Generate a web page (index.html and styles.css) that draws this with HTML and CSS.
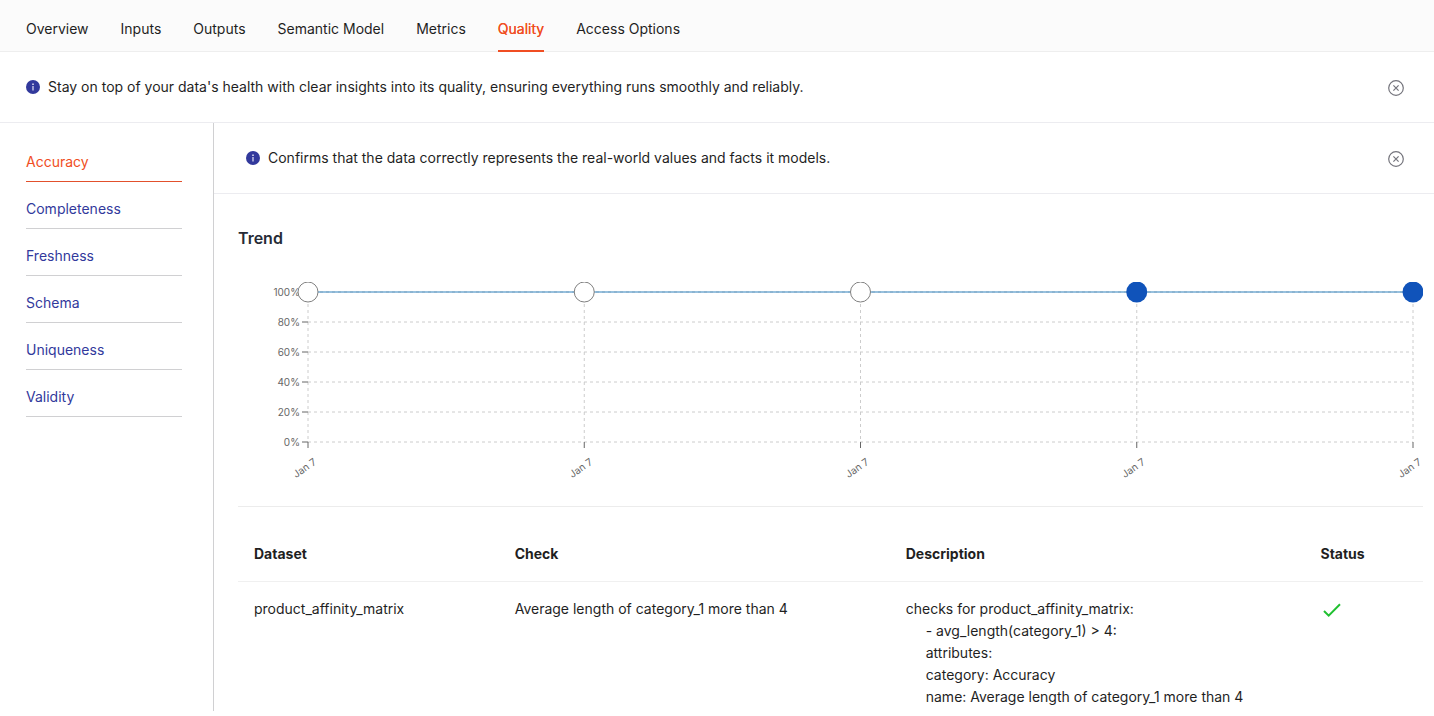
FILE: index.html
```html
<!DOCTYPE html>
<html lang="en">
<head>
<meta charset="utf-8">
<title>Quality</title>
<link rel="stylesheet" href="styles.css">
</head>
<body>
<svg class="defs" width="0" height="0" aria-hidden="true">
  <symbol id="info" viewBox="0 0 14 14">
    <circle cx="7" cy="7" r="7" fill="#32399c"/>
    <path d="M7 6v4.5" stroke="#e4e5f5" stroke-width="1.2"/>
    <path d="M7 3.5v1.4" stroke="#e4e5f5" stroke-width="1.5"/>
  </symbol>
  <symbol id="close" viewBox="0 0 16 16">
    <circle cx="8" cy="8" r="7.3" fill="none" stroke="#74747c" stroke-width="1.2"/>
    <path d="M5.4 5.4l5.2 5.2M10.6 5.4l-5.2 5.2" fill="none" stroke="#74747c" stroke-width="1.2"/>
  </symbol>
</svg>
<nav class="tabs">
  <a class="tab" href="#overview">Overview</a>
  <a class="tab" href="#inputs">Inputs</a>
  <a class="tab" href="#outputs">Outputs</a>
  <a class="tab" href="#model">Semantic Model</a>
  <a class="tab" href="#metrics">Metrics</a>
  <a class="tab tab-active" href="#quality" aria-current="page">Quality</a>
  <a class="tab" href="#access">Access Options</a>
</nav>
<div class="banner">
  <svg class="info"><use href="#info"/></svg>
  <p class="banner-text">Stay on top of your data's health with clear insights into its quality, ensuring everything runs smoothly and reliably.</p>
  <button class="close" type="button" aria-label="Close"><svg class="close-icon"><use href="#close"/></svg></button>
</div>
<div class="body">
  <aside class="sidebar">
    <a class="side-link side-active" href="#accuracy">Accuracy</a>
    <a class="side-link" href="#completeness">Completeness</a>
    <a class="side-link" href="#freshness">Freshness</a>
    <a class="side-link" href="#schema">Schema</a>
    <a class="side-link" href="#uniqueness">Uniqueness</a>
    <a class="side-link" href="#validity">Validity</a>
  </aside>
  <main class="main">
    <div class="banner banner-sub">
      <svg class="info"><use href="#info"/></svg>
      <p class="banner-text">Confirms that the data correctly represents the real-world values and facts it models.</p>
      <button class="close" type="button" aria-label="Close"><svg class="close-icon"><use href="#close"/></svg></button>
    </div>
    <div class="content">
      <h2 class="heading">Trend</h2>
      <svg class="chart" viewBox="0 0 1185 204" role="img" aria-label="Accuracy trend">
        <g class="grid">
          <path d="M70 10H1175M70 40H1175M70 70H1175M70 100H1175M70 130H1175M70 160H1175"/>
          <path d="M70 10V160M346.25 10V160M622.5 10V160M898.75 10V160M1175 10V160"/>
        </g>
        <path class="ticks" d="M64 10h6M64 40h6M64 70h6M64 100h6M64 130h6M64 160h6M70 160v6M346.25 160v6M622.5 160v6M898.75 160v6M1175 160v6"/>
        <g class="y-labels">
          <text x="62" y="14">100%</text>
          <text x="62" y="44">80%</text>
          <text x="62" y="74">60%</text>
          <text x="62" y="104">40%</text>
          <text x="62" y="134">20%</text>
          <text x="62" y="164">0%</text>
        </g>
        <g class="x-labels">
          <text transform="translate(68.5 189) rotate(-35)">Jan 7</text>
          <text transform="translate(344.75 189) rotate(-35)">Jan 7</text>
          <text transform="translate(621 189) rotate(-35)">Jan 7</text>
          <text transform="translate(897.25 189) rotate(-35)">Jan 7</text>
          <text transform="translate(1173.5 189) rotate(-35)">Jan 7</text>
        </g>
        <path class="line" d="M70 10H1175"/>
        <g class="dot">
          <circle cx="70" cy="10" r="10"/>
          <circle cx="346.25" cy="10" r="10"/>
          <circle cx="622.5" cy="10" r="10"/>
        </g>
        <g class="dot-filled">
          <circle cx="898.75" cy="10" r="10.5"/>
          <circle cx="1175" cy="10" r="10.5"/>
        </g>
      </svg>
      <table class="checks">
        <thead>
          <tr>
            <th class="col-dataset">Dataset</th>
            <th class="col-check">Check</th>
            <th class="col-description">Description</th>
            <th class="col-status">Status</th>
          </tr>
        </thead>
        <tbody>
          <tr>
            <td>product_affinity_matrix</td>
            <td>Average length of category_1 more than 4</td>
            <td>
              <div>checks for product_affinity_matrix:</div>
              <div class="nested">- avg_length(category_1) &gt; 4:</div>
              <div class="nested">attributes:</div>
              <div class="nested">category: Accuracy</div>
              <div class="nested">name: Average length of category_1 more than 4</div>
            </td>
            <td><svg class="pass" viewBox="0 0 24 24" role="img" aria-label="Passed"><path d="M4 13l4.7 4.7L20 6.3"/></svg></td>
          </tr>
        </tbody>
      </table>
    </div>
  </main>
</div>
</body>
</html>
```

FILE: styles.css
```css
* {
  box-sizing: border-box;
}

body {
  margin: 0;
  height: 100vh;
  padding-bottom: 5px;
  display: flex;
  flex-direction: column;
  overflow: hidden;
  background: #fff;
  color: #1f1f1f;
  font: 14px/22px Inter, sans-serif;
}

.defs {
  position: absolute;
}

.tabs {
  flex: none;
  display: flex;
  gap: 32px;
  padding: 0 26px;
  background: #fbfbfb;
  box-shadow: inset 0 -1px #eee;
}

.tab {
  padding: 18px 0 10px;
  border-bottom: 2px solid transparent;
  color: inherit;
  text-decoration: none;
}

.tab-active {
  border-color: #f04e23;
  color: #f04e23;
  text-shadow: 0 0 0.25px currentColor;
}

.banner {
  flex: none;
  display: flex;
  align-items: center;
  gap: 8px;
  padding: 24px 30px 24px 26px;
  border-bottom: 1px solid #ececf0;
}

.banner-sub {
  padding-left: 32px;
}

.info {
  flex: none;
  width: 14px;
  height: 14px;
}

.banner-text {
  flex: 1;
  margin: 0;
}

.close {
  display: flex;
  padding: 2px 0 0;
  border: 0;
  background: none;
  cursor: pointer;
}

.close-icon {
  width: 16px;
  height: 16px;
}

.body {
  flex: 1;
  min-height: 0;
  display: flex;
}

.sidebar {
  flex: none;
  width: 214px;
  padding: 12px 31px 0 26px;
  border-right: 1px solid #d0d0d2;
}

.side-link {
  display: block;
  padding: 16px 0 8px;
  border-bottom: 1px solid #d0d0d2;
  color: #32399c;
  text-decoration: none;
}

.side-active {
  border-color: #e2502c;
  color: #f04e23;
}

.main {
  flex: 1;
  min-width: 0;
  overflow: hidden;
}

.content {
  padding: 32px 11px 0 24px;
}

.heading {
  margin: 0 0 32px;
  color: #262b36;
  font-size: 16px;
  font-weight: 600;
  line-height: 24px;
}

.chart {
  display: block;
  width: 100%;
  margin-bottom: 20px;
}

.grid {
  fill: none;
  stroke: #ccc;
  stroke-dasharray: 3 3;
}

.ticks {
  fill: none;
  stroke: #666;
}

.y-labels,
.x-labels {
  fill: #666;
  font-size: 10px;
  text-anchor: end;
}

.x-labels {
  text-anchor: middle;
}

.line {
  fill: none;
  stroke: #3182bd;
}

.dot {
  fill: #fff;
  stroke: #808080;
}

.dot-filled {
  fill: #1053ba;
}

.checks {
  width: 100%;
  table-layout: fixed;
  border-collapse: separate;
  border-spacing: 0;
  border-top: 1px solid #ececec;
  padding-top: 20px;
  text-align: left;
}

.checks th,
.checks td {
  padding: 16px;
  vertical-align: top;
}

.checks th {
  border-bottom: 1px solid #f0f0f0;
  font-weight: 700;
}

.col-dataset {
  width: 22%;
}

.col-check {
  width: 33%;
}

.col-description {
  width: 35%;
}

.col-status {
  width: 10%;
}

.nested {
  padding-left: 20px;
}

.pass {
  display: block;
  width: 24px;
  height: 24px;
  fill: none;
  stroke: #20c030;
  stroke-width: 2;
}
```
